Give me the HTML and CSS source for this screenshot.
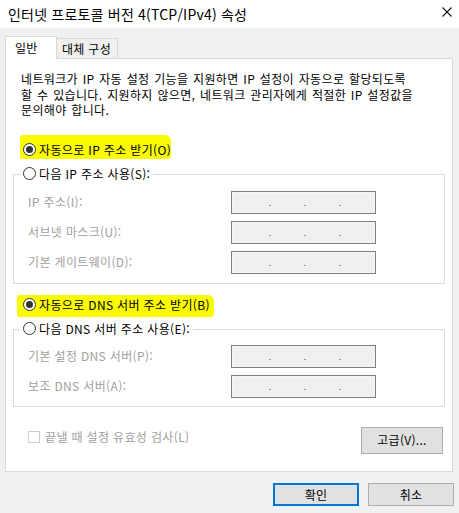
FILE: index.html
```html
<!DOCTYPE html>
<html lang="ko">
<head>
<meta charset="utf-8">
<title>인터넷 프로토콜 버전 4(TCP/IPv4) 속성</title>
<link rel="stylesheet" href="styles.css">
</head>
<body>
<div class="dialog">
  <div class="titlebar">
    <span class="title">인터넷 프로토콜 버전 4(TCP/IPv4) 속성</span>
    <svg class="close" width="10" height="10" viewBox="0 0 10 10"><path d="M0.5 0.5L9.5 9.5M9.5 0.5L0.5 9.5" stroke="#1a1a1a" stroke-width="1.1" fill="none"/></svg>
  </div>
  <div class="tabs">
    <div class="tab active">일반</div>
    <div class="tab">대체 구성</div>
  </div>
  <div class="panel">
    <p class="desc">네트워크가 IP 자동 설정 기능을 지원하면 IP 설정이 자동으로 할당되도록<br>할 수 있습니다. 지원하지 않으면, 네트워크 관리자에게 적절한 IP 설정값을<br>문의해야 합니다.</p>

    <div class="hlrow hl1"><span class="hl"><span class="radio on"></span><span class="rlabel">자동으로 IP 주소 받기(O)</span></span></div>

    <fieldset class="group g1">
      <legend><span class="radio"></span><span class="rlabel">다음 IP 주소 사용(S):</span></legend>
      <div class="grid">
        <span class="lbl">IP 주소(I):</span>
        <span class="ipbox"><i></i><i></i><i></i></span>
        <span class="lbl">서브넷 마스크(U):</span>
        <span class="ipbox"><i></i><i></i><i></i></span>
        <span class="lbl">기본 게이트웨이(D):</span>
        <span class="ipbox"><i></i><i></i><i></i></span>
      </div>
    </fieldset>

    <div class="hlrow hl2"><span class="hl"><span class="radio on"></span><span class="rlabel">자동으로 DNS 서버 주소 받기(B)</span></span></div>

    <fieldset class="group g2">
      <legend><span class="radio"></span><span class="rlabel">다음 DNS 서버 주소 사용(E):</span></legend>
      <div class="grid">
        <span class="lbl">기본 설정 DNS 서버(P):</span>
        <span class="ipbox"><i></i><i></i><i></i></span>
        <span class="lbl">보조 DNS 서버(A):</span>
        <span class="ipbox"><i></i><i></i><i></i></span>
      </div>
    </fieldset>

    <div class="bottomrow">
      <div class="check"><span class="box"></span><span class="clabel">끝낼 때 설정 유효성 검사(L)</span></div>
      <button class="btn adv">고급(V)...</button>
    </div>
  </div>
  <div class="footer">
    <button class="btn ok">확인</button>
    <button class="btn">취소</button>
  </div>
</div>
</body>
</html>
```
FILE: styles.css
```css
* { box-sizing: border-box; }
html, body { margin: 0; padding: 0; }
body {
  width: 459px;
  height: 513px;
  background: #f0f0f0;
  font-family: "Noto Sans CJK KR", "Noto Sans", sans-serif;
  font-size: 12px;
  color: #000;
  overflow: hidden;
}
.dialog { width: 459px; height: 513px; }
.titlebar {
  height: 28px;
  background: #fff;
  display: flex;
  align-items: center;
  justify-content: space-between;
  padding: 0 7px 1px 8px;
}
.title { font-size: 14px; line-height: 18px; letter-spacing: 0.2px; }
.close { display: block; margin-top: -3px; }

.tabs {
  display: flex;
  align-items: flex-end;
  margin: 8px 0 0 5px;
  height: 22px;
}
.tab {
  height: 20px;
  padding: 0 5px;
  border: 1px solid #d9d9d9;
  border-left: none;
  border-bottom: none;
  background: #f0f0f0;
  line-height: 19px;
  width: 61px;
  letter-spacing: 0.3px;
}
.tab.active {
  position: relative;
  z-index: 1;
  height: 23px;
  margin-bottom: -1px;
  width: 52px;
  border-left: 1px solid #d9d9d9;
  background: #fff;
  padding: 0 0 0 9px;
  line-height: 21px;
}
.panel {
  margin-left: 5px;
  width: 448px;
  height: 414px;
  background: #fff;
  border: 1px solid #d9d9d9;
  letter-spacing: 0.35px;
}
.desc {
  margin: 0;
  padding: 12px 0 0 15px;
  line-height: 15.5px;
  word-spacing: 1px;
}

.hlrow { display: flex; }
.hl {
  display: inline-flex;
  align-items: center;
  background: #fafa00;
  border-radius: 3px 6px 4px 2px;
}
.hl1 { margin: 17px 0 0 14px; }
.hl1 .hl { padding: 7px 0 1px 3px; }
.hl2 { margin: 11px 0 0 11px; }
.hl2 .hl { padding: 2px 4px 4px 6px; }

.radio {
  width: 13px;
  height: 13px;
  border: 1px solid #333;
  border-radius: 50%;
  background: #fff;
  display: inline-flex;
  align-items: center;
  justify-content: center;
  flex: none;
}
.radio.on::after {
  content: "";
  width: 7px;
  height: 7px;
  border-radius: 50%;
  background: #333;
}
.rlabel { margin-left: 3px; line-height: 16px; }

.group {
  margin: 0 7px;
  border: 1px solid #dcdcdc;
  padding: 0 0 0 14px;
  min-width: 0;
}
.group legend {
  display: flex;
  align-items: center;
  margin-left: -8px;
  padding: 0 3px 2px 3px;
  background: #fff;
}
.g1 { margin-top: 7px; padding-top: 7px; padding-bottom: 9px; }
.g2 { margin-top: 4px; padding-top: 6px; padding-bottom: 8px; }

.grid {
  display: grid;
  grid-template-columns: 203px 145px;
  row-gap: 7px;
  align-items: center;
}
.lbl { color: #a0a0a0; line-height: 16px; }
.ipbox {
  height: 23px;
  border: 1px solid #7f7f7f;
  box-shadow: inset 0 0 0 1px #f6f6f6;
  background: #f0f0f0;
  display: flex;
  align-items: flex-start;
  padding: 13px 0 0 37px;
  gap: 33px;
}
.ipbox i {
  display: block;
  width: 2px;
  height: 1px;
  background: #9a9a9a;
}

.bottomrow {
  display: flex;
  justify-content: space-between;
  align-items: flex-start;
  margin: 20px 9px 0 22px;
}
.check { display: flex; align-items: center; margin-top: 2px; }
.check .box {
  width: 12px;
  height: 12px;
  border: 1px solid #cccccc;
  background: #fff;
}
.clabel { color: #a0a0a0; margin-left: 5px; line-height: 16px; }

.btn {
  font-family: "Noto Sans CJK KR", "Noto Sans", sans-serif;
  font-size: 12px;
  color: #000;
  background: #e1e1e1;
  border: 1px solid #adadad;
  width: 86px;
  height: 23px;
  padding: 0;
  line-height: 16px;
  margin: 0;
  letter-spacing: 0.3px;
}
.btn.adv { width: 82px; height: 27px; }
.btn.ok { border: 2px solid #0078d7; }
.footer {
  display: flex;
  justify-content: flex-end;
  gap: 9px;
  padding: 11px 5px 0 0;
}
```
